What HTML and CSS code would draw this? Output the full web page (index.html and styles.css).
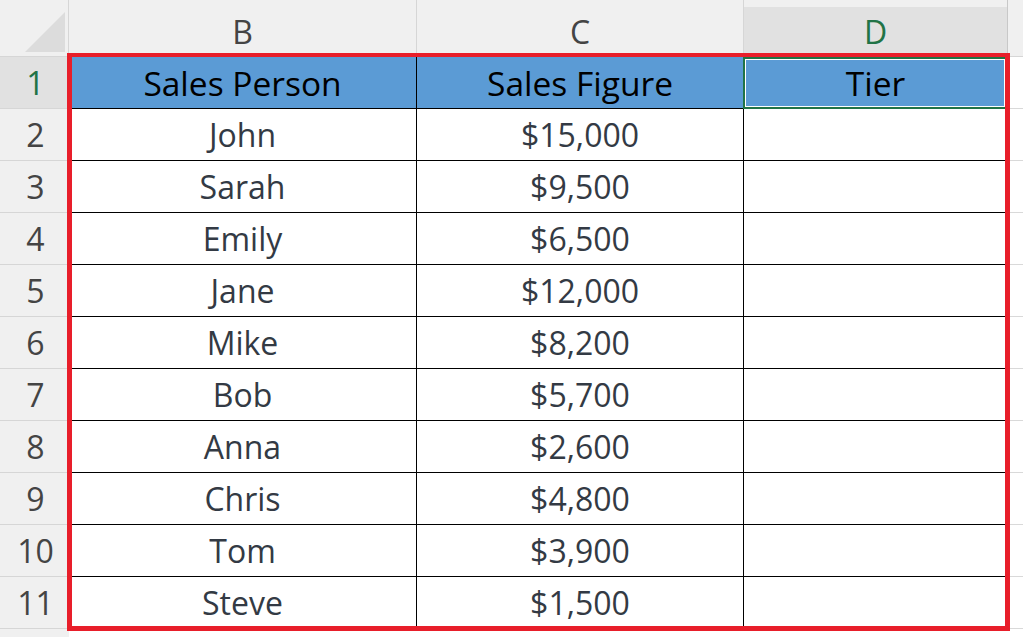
FILE: index.html
```html
<!DOCTYPE html>
<html>
<head>
<meta charset="utf-8">
<link rel="stylesheet" href="styles.css">
</head>
<body>
<div class="sheet">
  <div class="corner"><div class="tri"></div></div>
  <div class="colhead">B</div>
  <div class="colhead">C</div>
  <div class="colhead sel">D</div>
  <div class="colhead rest"></div>

  <div class="rowhead sel">1</div>
  <div class="cell head">Sales Person</div>
  <div class="cell head">Sales Figure</div>
  <div class="cell head active">Tier</div>
  <div class="cell rest"></div>

  <div class="rowhead">2</div><div class="cell">John</div><div class="cell">$15,000</div><div class="cell"></div><div class="cell rest"></div>
  <div class="rowhead">3</div><div class="cell">Sarah</div><div class="cell">$9,500</div><div class="cell"></div><div class="cell rest"></div>
  <div class="rowhead">4</div><div class="cell">Emily</div><div class="cell">$6,500</div><div class="cell"></div><div class="cell rest"></div>
  <div class="rowhead">5</div><div class="cell">Jane</div><div class="cell">$12,000</div><div class="cell"></div><div class="cell rest"></div>
  <div class="rowhead">6</div><div class="cell">Mike</div><div class="cell">$8,200</div><div class="cell"></div><div class="cell rest"></div>
  <div class="rowhead">7</div><div class="cell">Bob</div><div class="cell">$5,700</div><div class="cell"></div><div class="cell rest"></div>
  <div class="rowhead">8</div><div class="cell">Anna</div><div class="cell">$2,600</div><div class="cell"></div><div class="cell rest"></div>
  <div class="rowhead">9</div><div class="cell">Chris</div><div class="cell">$4,800</div><div class="cell"></div><div class="cell rest"></div>
  <div class="rowhead">10</div><div class="cell">Tom</div><div class="cell">$3,900</div><div class="cell"></div><div class="cell rest"></div>
  <div class="rowhead">11</div><div class="cell">Steve</div><div class="cell">$1,500</div><div class="cell"></div><div class="cell rest"></div>

  <div class="rowhead"></div><div class="cell blank"></div><div class="cell blank"></div><div class="cell blank"></div><div class="cell rest"></div>

  <div class="redbox"></div>
</div>
</body>
</html>
```

FILE: styles.css
```css
html, body {
  margin: 0;
  padding: 0;
  background: #ffffff;
}

.sheet {
  position: relative;
  width: 1023px;
  height: 637px;
  overflow: hidden;
  display: grid;
  grid-template-columns: 69px 348px 327px 264px 1fr;
  grid-template-rows: 57px repeat(12, 52px);
  font-family: "Open Sans", "Noto Sans", "Liberation Sans", sans-serif;
  font-size: 32px;
}

.corner {
  position: relative;
  background: #f0f0f0;
  border-right: 1px solid #d6d6d6;
  border-bottom: 1px solid #d6d6d6;
}

.tri {
  position: absolute;
  left: 25px;
  top: 12px;
  width: 0;
  height: 0;
  border-left: 40px solid transparent;
  border-bottom: 40px solid #dcdcdc;
}

.colhead {
  display: flex;
  align-items: center;
  justify-content: center;
  padding-top: 7px;
  box-sizing: border-box;
  background: #f0f0f0;
  color: #444444;
  border-right: 1px solid #d6d6d6;
  border-bottom: 1px solid #d6d6d6;
}

.colhead.sel {
  background: linear-gradient(#f0f0f0 0 7px, #e1e1e1 7px);
  color: #217346;
  border-right-color: #c8c8c8;
}

.colhead.rest {
  border-right: none;
}

.rowhead {
  display: flex;
  align-items: center;
  justify-content: center;
  padding-left: 2px;
  background: #f0f0f0;
  color: #444444;
  border-bottom: 1px solid #d6d6d6;
}

.rowhead.sel {
  background: #e1e1e1;
  color: #217346;
}

.cell {
  display: flex;
  align-items: center;
  justify-content: center;
  background: #ffffff;
  color: #333a44;
  border-right: 1px solid #000000;
  border-bottom: 1px solid #000000;
  white-space: nowrap;
}

.cell.head {
  background: #5b9bd5;
  color: #000000;
  font-size: 33.5px;
}

.cell.active {
  position: relative;
}

.cell.active::after {
  content: "";
  position: absolute;
  left: -1px;
  top: 0;
  right: 0;
  bottom: -1px;
  border: 2px solid #217346;
  box-shadow: inset 0 0 0 1px #ffffff;
}

.cell.rest {
  border-right: none;
  border-bottom: 1px solid #d9d9d9;
}

.cell.blank {
  border: none;
}

.redbox {
  position: absolute;
  left: 67px;
  top: 53px;
  width: 943px;
  height: 578px;
  box-sizing: border-box;
  border: 5px solid #e81e2a;
  border-top-width: 4px;
  pointer-events: none;
}
```
